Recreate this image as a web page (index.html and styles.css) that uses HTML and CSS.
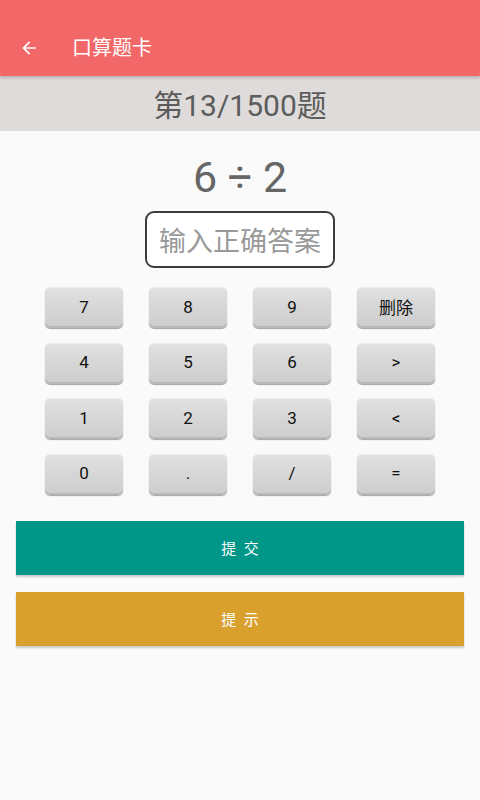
FILE: index.html
```html
<!DOCTYPE html>
<html lang="zh">
<head>
<meta charset="utf-8">
<link rel="stylesheet" href="styles.css">
</head>
<body>
<header class="toolbar">
  <svg class="back" width="20" height="20" viewBox="0 0 24 24"><path d="M20 11H7.83l5.59-5.59L12 4l-8 8 8 8 1.41-1.41L7.83 13H20v-2z" fill="#fff"/></svg>
  <span class="title">口算题卡</span>
</header>
<div class="progress">第13/1500题</div>
<main class="content">
  <div class="question">6 ÷ 2</div>
  <div class="answer">输入正确答案</div>
  <div class="keypad">
    <div class="cell"><button class="key">7</button></div>
    <div class="cell"><button class="key">8</button></div>
    <div class="cell"><button class="key">9</button></div>
    <div class="cell"><button class="key">删除</button></div>
    <div class="cell"><button class="key">4</button></div>
    <div class="cell"><button class="key">5</button></div>
    <div class="cell"><button class="key">6</button></div>
    <div class="cell"><button class="key">&gt;</button></div>
    <div class="cell"><button class="key">1</button></div>
    <div class="cell"><button class="key">2</button></div>
    <div class="cell"><button class="key">3</button></div>
    <div class="cell"><button class="key">&lt;</button></div>
    <div class="cell"><button class="key">0</button></div>
    <div class="cell"><button class="key">.</button></div>
    <div class="cell"><button class="key">/</button></div>
    <div class="cell"><button class="key">=</button></div>
  </div>
  <button class="action submit">提 交</button>
  <button class="action hint">提 示</button>
</main>
</body>
</html>
```

FILE: styles.css
```css
* { box-sizing: border-box; }
html, body {
  margin: 0;
  padding: 0;
  background: #fafafa;
  font-family: Roboto, "Noto Sans CJK SC", sans-serif;
  width: 480px;
  height: 800px;
  overflow: hidden;
}
.toolbar {
  height: 76px;
  background: #f26868;
  display: flex;
  align-items: flex-end;
  padding: 0 0 17px 19px;
  box-shadow: 0 2px 3px rgba(0,0,0,0.18);
  position: relative;
  z-index: 1;
}
.back { display: block; margin-bottom: 1px; }
.title {
  color: #fff;
  font-size: 20px;
  line-height: 22px;
  margin-left: 33px;
}
.progress {
  height: 55px;
  background: #dedbda;
  color: #5c5c5c;
  font-size: 30px;
  display: flex;
  align-items: center;
  justify-content: center;
  padding-bottom: 2px;
}
.content {
  display: flex;
  flex-direction: column;
  align-items: center;
}
.question {
  margin-top: 22px;
  font-size: 43px;
  line-height: 48px;
  color: #666;
}
.answer {
  margin-top: 10px;
  width: 190px;
  height: 57px;
  border: 2px solid #3c3c3c;
  border-radius: 9px;
  background: #fff;
  color: #999;
  font-size: 27px;
  display: flex;
  align-items: center;
  justify-content: center;
}
.keypad {
  margin-top: 19px;
  width: 416px;
  display: grid;
  grid-template-columns: repeat(4, 104px);
  row-gap: 14.5px;
}
.cell { display: flex; justify-content: center; }
.key {
  width: 78px;
  height: 41px;
  border: none;
  border-radius: 5px;
  background: linear-gradient(180deg, #e2e2e2 0%, #d6d6d6 50%, #cdcdcd 100%);
  box-shadow: inset 0 -2px 0 #b9b9b9, inset 0 1px 0 #ececec, 0 1px 1px rgba(0,0,0,0.35);
  font-family: Roboto, "Noto Sans CJK SC", sans-serif;
  font-size: 17px;
  color: #111;
  padding: 0 0 2px;
}
.action {
  border: none;
  width: 448px;
  height: 54px;
  color: #fff;
  font-family: Roboto, "Noto Sans CJK SC", sans-serif;
  font-size: 15px;
  letter-spacing: 2px;
  text-indent: 2px;
  box-shadow: 0 2px 2px rgba(0,0,0,0.2);
}
.submit { margin-top: 26px; background: #009688; }
.hint { margin-top: 17px; background: #d9a02e; }
```
